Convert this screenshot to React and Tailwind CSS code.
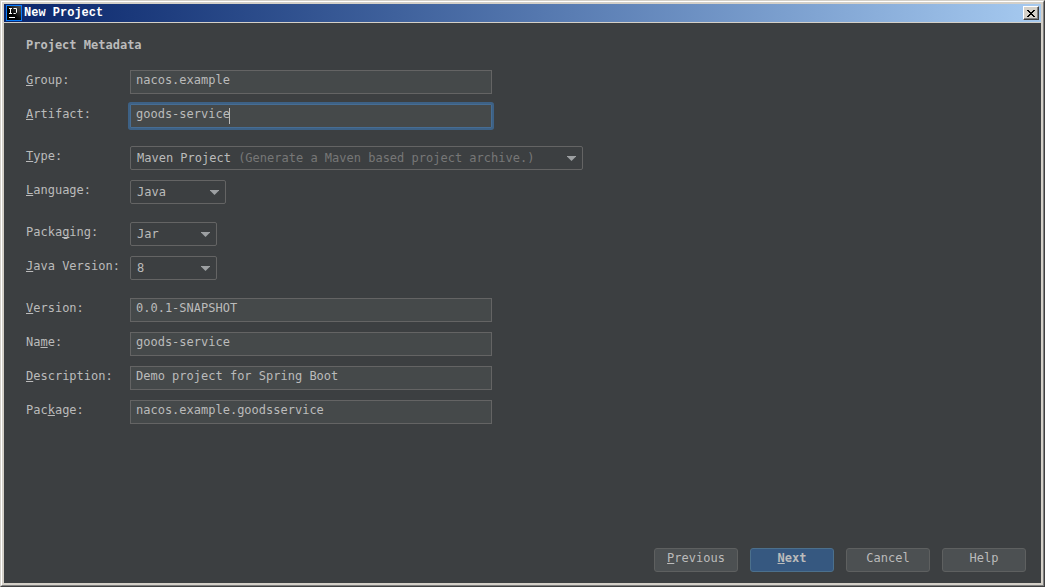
import React, { useState } from "react";

const Mnemonic = ({ text, at }) => {
  if (at === undefined) return text;
  return (
    <>
      {text.slice(0, at)}
      <span className="underline underline-offset-1 [text-decoration-skip-ink:none]">
        {text[at]}
      </span>
      {text.slice(at + 1)}
    </>
  );
};

const Row = ({ id, label, at, children }) => (
  <div className="flex items-start">
    <label htmlFor={id} className="w-[104px] shrink-0 leading-5">
      <Mnemonic text={label} at={at} />
    </label>
    {children}
  </div>
);

const TextRow = ({ id, label, at, value, onChange, active }) => (
  <Row id={id} label={label} at={at}>
    <div className="relative w-[362px]">
      <input
        id={id}
        type="text"
        spellCheck={false}
        value={value}
        onChange={(e) => onChange(id, e.target.value)}
        className={`block h-6 w-full border bg-[#45494a] px-[5px] pb-1 leading-4 text-[#bbbbbb] outline-none ${
          active
            ? "rounded-[1px] border-[#466d94] caret-transparent ring-2 ring-[#3d6185]"
            : "border-[#646464]"
        }`}
      />
      {active && (
        <span
          className="pointer-events-none absolute top-1 h-4 w-px bg-[#bbbbbb]"
          style={{ left: `calc(5px + ${value.length}ch)` }}
        />
      )}
    </div>
  </Row>
);

const SelectRow = ({ id, label, at, options, hint, width }) => (
  <Row id={id} label={label} at={at}>
    <div className={`relative ${width}`}>
      <select
        id={id}
        className="block h-6 w-full appearance-none rounded-xs border border-[#646464] bg-[#3c3f41] pr-6 pl-1.5 leading-5 text-[#bbbbbb] outline-none"
      >
        {options.map((option) => (
          <option key={option}>{option}</option>
        ))}
      </select>
      {hint && (
        <span className="pointer-events-none absolute top-0.5 left-[calc(7px+14ch)] leading-5 text-[#777777]">
          {hint}
        </span>
      )}
      <svg
        className="pointer-events-none absolute top-[10px] right-[7px]"
        width="9"
        height="5"
        viewBox="0 0 9 5"
        fill="#9da0a2"
      >
        <path d="M0 0h9v0.5L4.5 5L0 0.5z" />
      </svg>
    </div>
  </Row>
);

const DialogButton = ({ label, at, primary }) => (
  <button
    type="button"
    className={`h-6 w-[84px] rounded-[3px] border pb-1 leading-4 ${
      primary
        ? "border-[#4c708c] bg-[#365880] font-bold"
        : "border-[#5e6060] bg-[#4c5052]"
    }`}
  >
    <Mnemonic text={label} at={at} />
  </button>
);

const TitleBar = () => (
  <div className="flex h-[19px] items-center border-b border-[#d4d0c8] bg-linear-to-r from-[#0a246a] to-[#a6caf0] px-0.5">
    <svg width="16" height="16" viewBox="0 0 16 16" className="shrink-0">
      <defs>
        <linearGradient id="ideaLogo" x1="0" y1="1" x2="1" y2="0">
          <stop offset="0.4" stopColor="#000000" />
          <stop offset="1" stopColor="#555555" />
        </linearGradient>
      </defs>
      <rect width="16" height="16" fill="#087cfa" />
      <rect x="1" y="1" width="14" height="14" fill="url(#ideaLogo)" />
      <path
        d="M3 3.5h3M4.5 3.5v5M3 8.5h3M7.5 3.5h3v4l-1 1h-2M3 12.5h6"
        fill="none"
        stroke="#ffffff"
      />
    </svg>
    <h1 className="ml-0.5 flex-1 font-['Liberation_Mono',monospace] leading-4 font-bold text-white">
      New Project
    </h1>
    <button
      type="button"
      aria-label="Close"
      className="flex h-3.5 w-4 items-center justify-center border border-t-white border-r-[#404040] border-b-[#404040] border-l-white bg-[#d4d0c8] shadow-[inset_-1px_-1px_0_#808080]"
    >
      <svg
        width="8"
        height="7"
        viewBox="0 0 8 7"
        fill="#000000"
        shapeRendering="crispEdges"
      >
        <path d="M0 0h2v1h1v1h2v-1h1v-1h2v1h-1v1h-1v1h-1v1h1v1h1v1h1v1h-2v-1h-1v-1h-2v1h-1v1h-2v-1h1v-1h1v-1h1v-1h-1v-1h-1v-1h-1z" />
      </svg>
    </button>
  </div>
);

const App = () => {
  const [form, setForm] = useState({
    group: "nacos.example",
    artifact: "goods-service",
    version: "0.0.1-SNAPSHOT",
    name: "goods-service",
    description: "Demo project for Spring Boot",
    package: "nacos.example.goodsservice",
  });

  const handleChange = (key, value) => {
    setForm((prev) => ({ ...prev, [key]: value }));
  };

  const field = (id) => ({ id, value: form[id], onChange: handleChange });

  return (
    // Classic raised window frame
    <div className="flex min-h-screen flex-col border border-t-[#d4d0c8] border-r-[#404040] border-b-[#404040] border-l-[#d4d0c8] font-['DejaVu_Sans_Mono',monospace] text-[12px] text-[#bbbbbb]">
      <div className="flex flex-1 flex-col border border-t-white border-r-[#808080] border-b-[#808080] border-l-white">
        <div className="flex flex-1 flex-col border-2 border-[#d4d0c8] bg-[#3c3f41]">
          <TitleBar />

          <form
            className="flex flex-1 flex-col"
            onSubmit={(e) => e.preventDefault()}
          >
            <div className="flex-1 px-[22px] pt-3">
              <h2 className="leading-5 font-bold">Project Metadata</h2>

              <div className="mt-[15px] flex flex-col gap-[18px]">
                <div className="flex flex-col gap-2.5">
                  <TextRow label="Group:" at={0} {...field("group")} />
                  <TextRow
                    label="Artifact:"
                    at={0}
                    active
                    {...field("artifact")}
                  />
                </div>

                <div className="flex flex-col gap-2.5">
                  <SelectRow
                    id="type"
                    label="Type:"
                    at={0}
                    options={["Maven Project", "Gradle Project"]}
                    hint="(Generate a Maven based project archive.)"
                    width="w-[453px]"
                  />
                  <SelectRow
                    id="language"
                    label="Language:"
                    at={0}
                    options={["Java", "Kotlin", "Groovy"]}
                    width="w-24"
                  />
                </div>

                <div className="flex flex-col gap-2.5">
                  <SelectRow
                    id="packaging"
                    label="Packaging:"
                    at={5}
                    options={["Jar", "War"]}
                    width="w-[87px]"
                  />
                  <SelectRow
                    id="javaVersion"
                    label="Java Version:"
                    at={0}
                    options={["8", "11", "14"]}
                    width="w-[87px]"
                  />
                </div>

                <div className="flex flex-col gap-2.5">
                  <TextRow label="Version:" at={0} {...field("version")} />
                  <TextRow label="Name:" at={2} {...field("name")} />
                  <TextRow
                    label="Description:"
                    at={0}
                    {...field("description")}
                  />
                  <TextRow label="Package:" at={3} {...field("package")} />
                </div>
              </div>
            </div>

            <div className="flex justify-end gap-3 pr-[15px] pb-[11px]">
              <DialogButton label="Previous" at={0} />
              <DialogButton label="Next" at={0} primary />
              <DialogButton label="Cancel" />
              <DialogButton label="Help" />
            </div>
          </form>
        </div>
      </div>
    </div>
  );
};

export default App;
